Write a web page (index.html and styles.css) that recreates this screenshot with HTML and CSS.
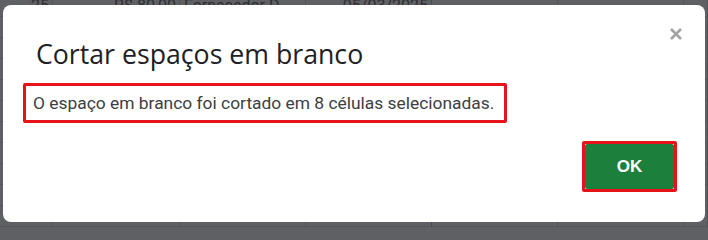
FILE: index.html
```html
<!DOCTYPE html>
<html lang="pt-BR">
<head>
<meta charset="utf-8">
<title>Cortar espaços em branco</title>
<link rel="stylesheet" href="styles.css">
</head>
<body>
<div class="sheet">
  <div class="row">
    <div class="cell num">25</div>
    <div class="cell num">R$ 80,00</div>
    <div class="cell">Fornecedor D</div>
    <div class="cell num sel">05/03/2025</div>
    <div class="cell"></div>
    <div class="cell"></div>
    <div class="cell"></div>
  </div>
  <div class="row"><div class="cell"></div><div class="cell"></div><div class="cell"></div><div class="cell sel"></div><div class="cell"></div><div class="cell"></div><div class="cell"></div></div>
  <div class="row"><div class="cell"></div><div class="cell"></div><div class="cell"></div><div class="cell sel"></div><div class="cell"></div><div class="cell"></div><div class="cell"></div></div>
  <div class="row"><div class="cell"></div><div class="cell"></div><div class="cell"></div><div class="cell sel"></div><div class="cell"></div><div class="cell"></div><div class="cell"></div></div>
  <div class="row"><div class="cell"></div><div class="cell"></div><div class="cell"></div><div class="cell sel"></div><div class="cell"></div><div class="cell"></div><div class="cell"></div></div>
  <div class="row"><div class="cell"></div><div class="cell"></div><div class="cell"></div><div class="cell sel"></div><div class="cell"></div><div class="cell"></div><div class="cell"></div></div>
  <div class="row"><div class="cell"></div><div class="cell"></div><div class="cell"></div><div class="cell sel"></div><div class="cell"></div><div class="cell"></div><div class="cell"></div></div>
  <div class="row"><div class="cell"></div><div class="cell"></div><div class="cell"></div><div class="cell sel"></div><div class="cell"></div><div class="cell"></div><div class="cell"></div></div>
  <div class="row"><div class="cell"></div><div class="cell"></div><div class="cell"></div><div class="cell sel"></div><div class="cell"></div><div class="cell"></div><div class="cell"></div></div>
  <div class="row"><div class="cell"></div><div class="cell"></div><div class="cell"></div><div class="cell sel"></div><div class="cell"></div><div class="cell"></div><div class="cell"></div></div>
  <div class="row"><div class="cell"></div><div class="cell"></div><div class="cell"></div><div class="cell sel"></div><div class="cell"></div><div class="cell"></div><div class="cell"></div></div>
</div>

<div class="dialog" role="dialog">
  <div class="header">
    <h1 class="title">Cortar espaços em branco</h1>
    <button class="close" aria-label="Fechar">
      <svg width="14" height="12" viewBox="0 0 14 12"><path d="M2 1 L12 11 M12 1 L2 11" stroke="#a3a3a3" stroke-width="2.6" stroke-linecap="butt" fill="none"/></svg>
    </button>
  </div>
  <p class="message">O espaço em branco foi cortado em 8 células selecionadas.</p>
  <div class="footer">
    <div class="ok-frame"><button class="ok">OK</button></div>
  </div>
</div>
</body>
</html>
```

FILE: styles.css
```css
html, body {
  margin: 0;
  padding: 0;
}
body {
  width: 708px;
  height: 230px;
  overflow: hidden;
  position: relative;
  background: #5f6064;
  font-family: Roboto, "Liberation Sans", Arial, sans-serif;
}
.sheet {
  margin-top: -4px;
}
.row {
  display: grid;
  grid-template-columns: 53px 127px 126px 126px 126px 126px 1fr;
  height: 21px;
}
.cell {
  box-sizing: border-box;
  border-right: 1px solid #535458;
  border-bottom: 1px solid #535458;
  font-size: 16px;
  line-height: 20px;
  color: #2e2f31;
  padding: 0 3px 0 4px;
  white-space: nowrap;
  overflow: hidden;
}
.cell.num {
  text-align: right;
}
.cell.sel {
  border-right-color: #3e4a66;
}
.dialog {
  position: absolute;
  left: 3px;
  top: 5px;
  width: 702px;
  height: 217px;
  box-sizing: border-box;
  background: #ffffff;
  border-radius: 8px;
  display: flex;
  flex-direction: column;
  padding: 0 28px 30px 20px;
}
.header {
  display: flex;
  justify-content: space-between;
  align-items: flex-start;
  padding-left: 13px;
}
.title {
  margin: 33px 0 0;
  font-family: "Open Sans", Roboto, sans-serif;
  font-weight: 400;
  font-size: 26.7px;
  line-height: 32px;
  color: #202124;
}
.close {
  margin: 23px -6px 0 0;
  padding: 0;
  border: 0;
  background: none;
  width: 14px;
  height: 12px;
  display: flex;
}
.message {
  align-self: flex-start;
  margin: 13px 0 0;
  box-sizing: border-box;
  height: 40px;
  border: 3px solid #e8121a;
  border-radius: 2px;
  padding: 0 10px 0 7px;
  font-family: Roboto, sans-serif;
  font-size: 17.4px;
  line-height: 34px;
  color: #3c4043;
}
.footer {
  margin-top: auto;
  display: flex;
  justify-content: flex-end;
}
.ok-frame {
  border: 3px solid #e8121a;
  border-radius: 2px;
  display: flex;
}
.ok {
  width: 89px;
  height: 45px;
  border: 0;
  border-radius: 2px;
  background: #1c7f3c;
  color: #ffffff;
  font-family: "Liberation Sans", Arial, sans-serif;
  font-weight: 700;
  font-size: 17px;
  padding: 0;
}
```
